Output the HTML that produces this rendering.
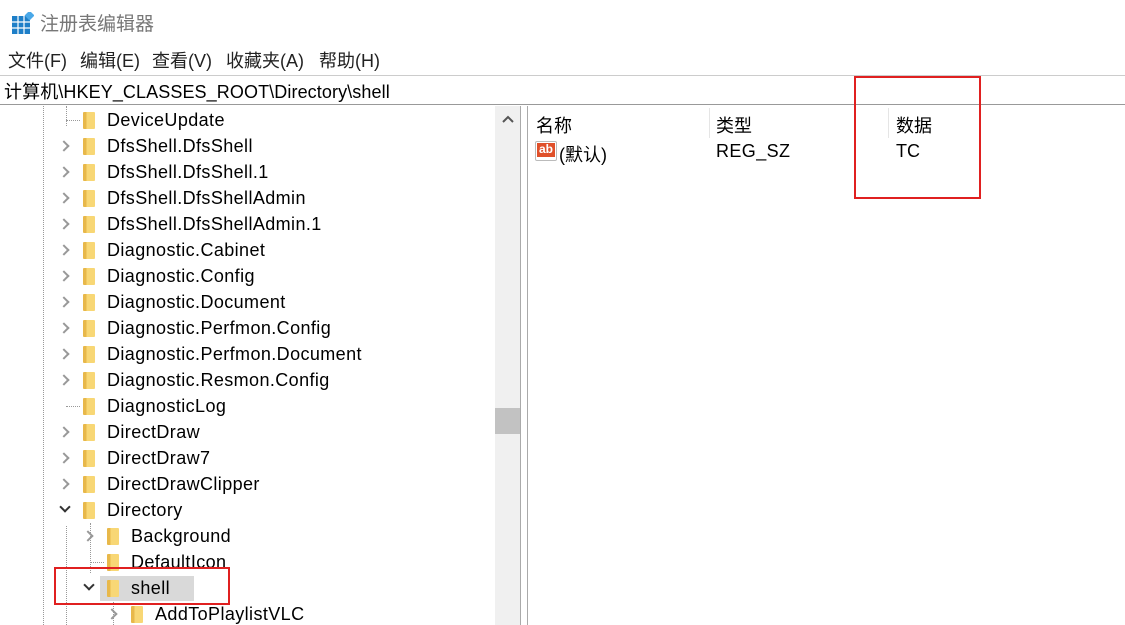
<!DOCTYPE html>
<html><head><meta charset="utf-8"><style>
*{margin:0;padding:0;box-sizing:border-box}
body{width:1125px;height:625px;overflow:hidden;background:#fff;font-family:"Liberation Sans","Noto Sans CJK SC",sans-serif;color:#000;position:relative}
.title{position:absolute;left:40px;top:9px;font-size:19px;color:#777}
.menu{position:absolute;left:8px;top:47px;font-size:18px;color:#222}
.menu span{position:absolute;white-space:nowrap}
.addr{position:absolute;left:0;top:75px;width:1125px;height:30px;border-top:1px solid #ccc;border-bottom:1px solid #999;font-size:18px;padding:2px 0 0 4px;letter-spacing:0.1px}
.tree{position:absolute;left:0;top:106px;width:495px;height:519px;overflow:hidden}
.row{position:absolute;height:26px;font-size:18px;line-height:26px;white-space:nowrap;letter-spacing:0.4px}
.fold{position:absolute;top:5px;width:12px;height:17px;background:linear-gradient(90deg,#e8b84a 0 30%,#f8d775 30%);border-radius:1px}
.chev{position:absolute;top:8px;width:8px;height:8px;border-right:2px solid #999;border-bottom:2px solid #999;transform:rotate(-45deg)}
.chev.open{transform:rotate(45deg);border-color:#333;top:5px}
.vline{position:absolute;border-left:1px dotted #999}
.sb{position:absolute;left:495px;top:106px;width:25px;height:519px;background:#f0f0f0}
.thumb{position:absolute;left:495px;top:408px;width:25px;height:26px;background:#c2c2c2}
.split{position:absolute;left:520px;top:106px;width:8px;height:519px;background:#fff;border-left:1px solid #aaa;border-right:1px solid #aaa}
.hdr{position:absolute;top:112px;font-size:18px}
.red{position:absolute;border:2px solid #e02020}
</style></head><body>
<svg style="position:absolute;left:12px;top:12px" width="22" height="22" viewBox="0 0 22 22"><rect x="0" y="4" width="18" height="18" fill="#1e7fc8"/><g stroke="#fff" stroke-width="1.2"><line x1="6" y1="4" x2="6" y2="22"/><line x1="12" y1="4" x2="12" y2="22"/><line x1="0" y1="10" x2="18" y2="10"/><line x1="0" y1="16" x2="18" y2="16"/></g><rect x="14" y="0" width="7" height="7" fill="#4aa8e8" transform="rotate(45 17.5 3.5)"/></svg>
<div class="title">注册表编辑器</div>
<div class="menu"><span style="left:0">文件(F)</span><span style="left:72px">编辑(E)</span><span style="left:144px">查看(V)</span><span style="left:218px">收藏夹(A)</span><span style="left:311px">帮助(H)</span></div>
<div class="addr">计算机\HKEY_CLASSES_ROOT\Directory\shell</div>
<div class="tree">
<div class="vline" style="left:43px;top:0;height:519px"></div>
<div class="vline" style="left:66px;top:0;height:20px"></div>
<div class="vline" style="left:66px;top:420px;height:99px"></div>
<div class="vline" style="left:90px;top:417px;height:50px"></div>
<div class="vline" style="left:113px;top:494px;height:25px"></div>
<div style="position:absolute;left:66px;top:14px;width:14px;border-top:1px dotted #999"></div>
<div style="position:absolute;left:66px;top:300px;width:14px;border-top:1px dotted #999"></div>
<div style="position:absolute;left:90px;top:456px;width:14px;border-top:1px dotted #999"></div>
</div>
<div class="tree" id="t"></div>
<div class="sb"></div><div class="thumb"></div>
<svg style="position:absolute;left:501px;top:114px" width="14" height="10"><path d="M2 8 L7 3 L12 8" stroke="#555" stroke-width="2" fill="none"/></svg>
<div class="split"></div>
<div class="hdr" style="left:536px">名称</div>
<div style="position:absolute;left:709px;top:108px;height:30px;border-left:1px solid #e5e5e5"></div>
<div class="hdr" style="left:716px">类型</div>
<div style="position:absolute;left:888px;top:108px;height:30px;border-left:1px solid #e5e5e5"></div>
<div class="hdr" style="left:896px">数据</div>
<div style="position:absolute;left:535px;top:141px;width:22px;height:20px;background:#fff;border:1px solid #bbb;border-radius:2px"><div style="position:absolute;left:1px;top:1px;width:18px;height:14px;background:#e0502a;color:#fff;font-size:12px;font-weight:bold;line-height:13px;text-align:center">ab</div></div>
<div class="hdr" style="left:559px;top:141px">(默认)</div>
<div class="hdr" style="left:716px;top:141px;letter-spacing:0.4px">REG_SZ</div>
<div class="hdr" style="left:896px;top:141px">TC</div>
<div class="red" style="left:854px;top:76px;width:127px;height:123px"></div>
<div class="red" style="left:54px;top:567px;width:176px;height:38px"></div>
<script>
var rows=[[0,'DeviceUpdate',0],[0,'DfsShell.DfsShell',1],[0,'DfsShell.DfsShell.1',1],[0,'DfsShell.DfsShellAdmin',1],[0,'DfsShell.DfsShellAdmin.1',1],[0,'Diagnostic.Cabinet',1],[0,'Diagnostic.Config',1],[0,'Diagnostic.Document',1],[0,'Diagnostic.Perfmon.Config',1],[0,'Diagnostic.Perfmon.Document',1],[0,'Diagnostic.Resmon.Config',1],[0,'DiagnosticLog',0],[0,'DirectDraw',1],[0,'DirectDraw7',1],[0,'DirectDrawClipper',1],[0,'Directory',2],[1,'Background',1],[1,'DefaultIcon',0],[1,'shell',3],[2,'AddToPlaylistVLC',1]];
var h='';rows.forEach(function(r,i){var y=i*26+1,x=r[0]*24;
if(r[2]==1)h+='<div class="chev" style="left:'+(x+60)+'px;top:'+(y+9)+'px"></div>';
if(r[2]>=2)h+='<div class="chev open" style="left:'+(x+61)+'px;top:'+(y+6)+'px"></div>';
if(r[2]==3)h+='<div style="position:absolute;left:'+(x+76)+'px;top:'+(y+1)+'px;width:94px;height:25px;background:#d9d9d9"></div>';
h+='<div class="fold" style="left:'+(x+83)+'px;top:'+(y+5)+'px"></div>';
h+='<div class="row" style="left:'+(x+107)+'px;top:'+y+'px">'+r[1]+'</div>';});
document.getElementById('t').innerHTML=h;
</script>
</body></html>
